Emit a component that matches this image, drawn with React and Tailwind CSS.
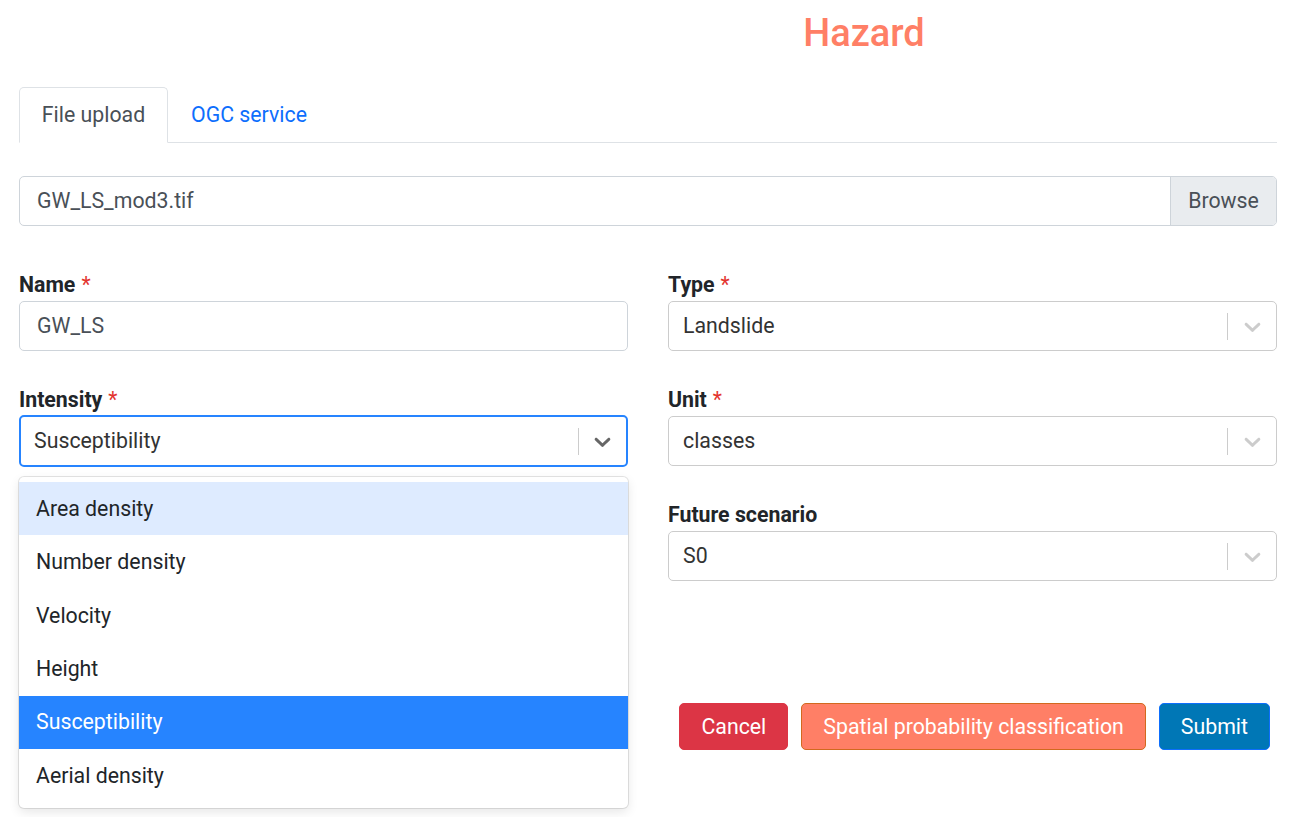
import React from "react";

const Chevron = ({ color }) => (
  <svg width="27" height="27" viewBox="0 0 20 20" fill={color}>
    <path d="M4.516 7.548c0.436-0.446 1.043-0.481 1.576 0l3.908 3.747 3.908-3.747c0.533-0.481 1.141-0.446 1.574 0 0.436 0.445 0.408 1.197 0 1.615-0.406 0.418-4.695 4.502-4.695 4.502-0.217 0.223-0.502 0.335-0.787 0.335s-0.57-0.112-0.789-0.335c0 0-4.287-4.084-4.695-4.502s-0.436-1.17 0-1.615z" />
  </svg>
);

const Label = ({ children, required }) => (
  <div className="h-[24px] mb-[4px] flex items-center font-bold text-[21.3px] text-[#212529] leading-none">
    {children}
    {required && <span className="ml-[6px] text-[#e3342f] font-normal">*</span>}
  </div>
);

const Select = ({ value, focused }) => (
  <div
    className={
      focused
        ? "h-[52px] -mt-[1px] flex items-center bg-white rounded-[5px] border-2 border-[#2684ff]"
        : "h-[50px] flex items-center bg-white rounded-[5px] border border-[#cccccc]"
    }
  >
    <div className={focused ? "flex-1 pl-[13px] text-[21.3px] text-[#333333]" : "flex-1 pl-[14px] text-[21.3px] text-[#333333]"}>{value}</div>
    <div className="w-px h-[27px] bg-[#cccccc]" />
    <div className={focused ? "w-[47px] flex justify-center" : "w-[48px] flex justify-center"}>
      <Chevron color={focused ? "#666666" : "#cccccc"} />
    </div>
  </div>
);

const TextInput = ({ value }) => (
  <div className="h-[50px] flex items-center px-[17px] text-[21.3px] text-[#495057] border border-[#ced4da] rounded-[5px] bg-white">
    {value}
  </div>
);

const options = ["Area density", "Number density", "Velocity", "Height", "Susceptibility", "Aerial density"];

export default function App() {
  return (
    <div className="min-h-[817px] bg-white overflow-hidden font-['Roboto',sans-serif] text-[#212529]">
      <div className="pl-[19px] pr-[19px] pt-[11px]">
        <h1 className="text-center pl-[432px] text-[38px] font-medium leading-[44px] text-[#ff7f66]">Hazard</h1>

        <div className="mt-[32px] flex border-b border-[#dee2e6] h-[56px]">
          <div className="w-[149px] -mb-px flex items-center justify-center bg-white border border-[#dee2e6] border-b-white rounded-t-[5px] text-[21.3px] text-[#495057]">
            File upload
          </div>
          <div className="px-[23px] flex items-center text-[21.3px] text-[#0d6efd]">OGC service</div>
        </div>

        <div className="mt-[33px] h-[50px] flex border border-[#ced4da] rounded-[5px] overflow-hidden">
          <div className="flex-1 flex items-center pl-[17px] text-[21.3px] text-[#495057]">GW_LS_mod3.tif</div>
          <div className="w-[106px] flex items-center justify-center bg-[#e9ecef] border-l border-[#ced4da] text-[21.3px] text-[#495057]">
            Browse
          </div>
        </div>

        <div className="mt-[47px] grid grid-cols-2 gap-x-[40px]">
          <div className="flex flex-col gap-[37px]">
            <div>
              <Label required>Name</Label>
              <TextInput value="GW_LS" />
            </div>
            <div className="relative">
              <Label required>Intensity</Label>
              <Select value="Susceptibility" focused />
              <div className="absolute z-10 left-0 right-0 top-[89px] bg-white rounded-[5px] shadow-[0_0_0_1px_rgba(0,0,0,0.1),0_4px_11px_rgba(0,0,0,0.1)] pt-[5px] pb-[6px]">
                {options.map((o) => (
                  <div
                    key={o}
                    className={
                      o === "Susceptibility"
                        ? "h-[53.4px] flex items-center pl-[17px] text-[21.3px] bg-[#2684ff] text-white"
                        : o === "Area density"
                        ? "h-[53.4px] flex items-center pl-[17px] text-[21.3px] bg-[#deebff] text-[#212529]"
                        : "h-[53.4px] flex items-center pl-[17px] text-[21.3px] text-[#212529]"
                    }
                  >
                    {o}
                  </div>
                ))}
              </div>
            </div>
            <div className="h-[78px]" />
            <div className="h-[78px]" />
          </div>

          <div className="flex flex-col">
            <div>
              <Label required>Type</Label>
              <Select value="Landslide" />
            </div>
            <div className="mt-[37px]">
              <Label required>Unit</Label>
              <Select value="classes" />
            </div>
            <div className="mt-[37px]">
              <Label>Future scenario</Label>
              <Select value="S0" />
            </div>
            <div className="mt-[122px] pr-[7px] flex justify-end gap-[13px]">
              <button className="h-[47px] px-[21px] rounded-[5px] bg-[#dc3545] border border-[#dc3545] text-white text-[21.3px]">Cancel</button>
              <button className="h-[47px] px-[21px] rounded-[5px] bg-[#ff7f66] border border-[#d2691e] text-white text-[21.3px]">
                Spatial probability classification
              </button>
              <button className="h-[47px] px-[21px] rounded-[5px] bg-[#0077b6] border border-[#0d6efd] text-white text-[21.3px]">Submit</button>
            </div>
          </div>
        </div>
      </div>
    </div>
  );
}
